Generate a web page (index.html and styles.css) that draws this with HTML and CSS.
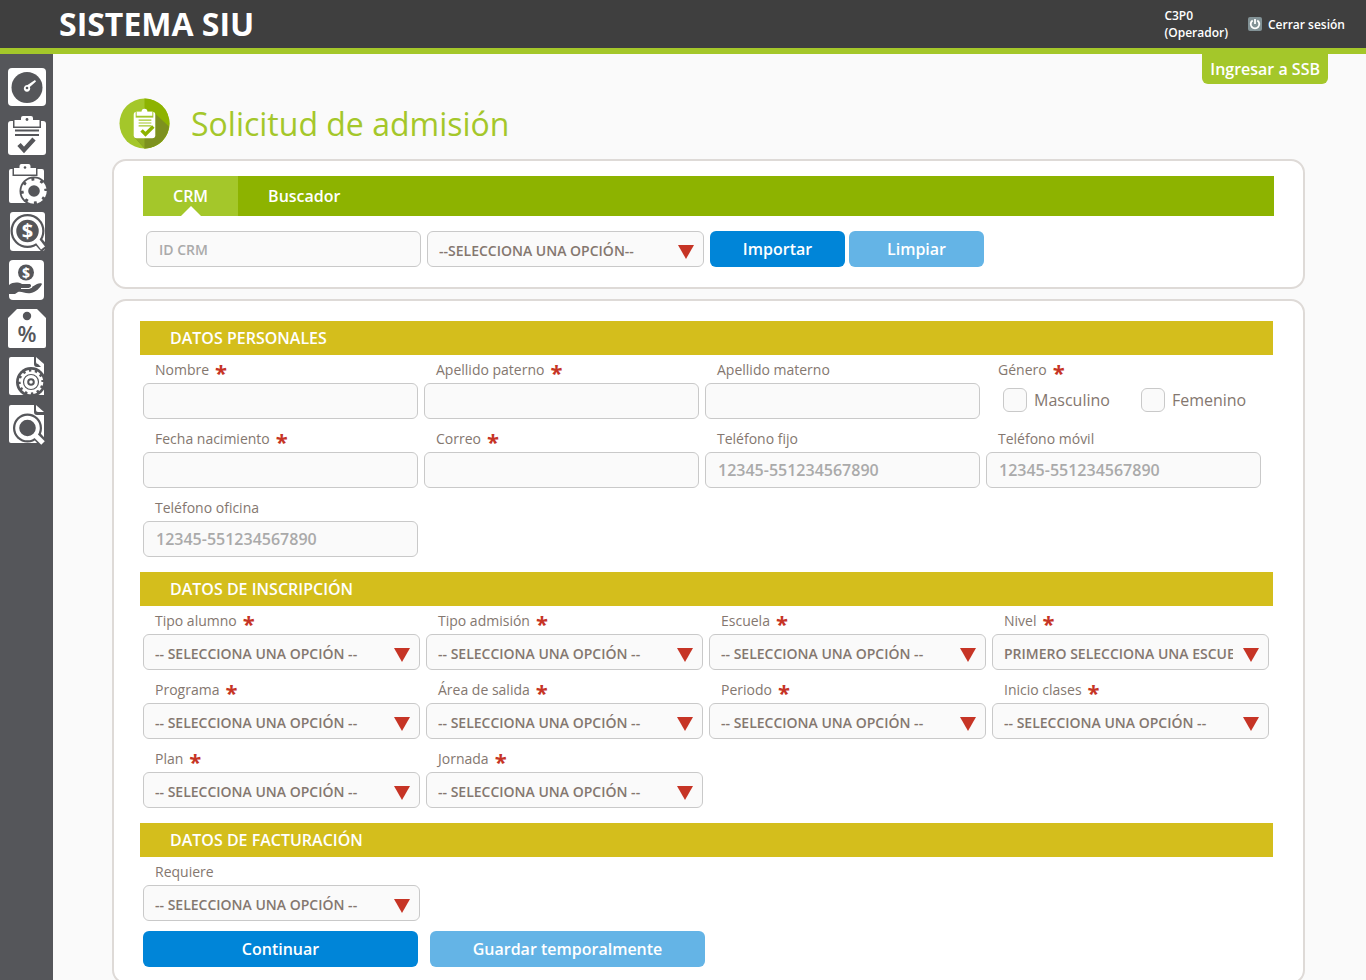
FILE: index.html
```html
<!DOCTYPE html>
<html lang="es">
<head>
<meta charset="utf-8">
<title>Sistema SIU</title>
<link rel="stylesheet" href="styles.css">
</head>
<body>
<header class="topbar">
  <div class="brand">SISTEMA SIU</div>
  <div class="user">C3P0<br>(Operador)</div>
  <a class="logout" href="#"><svg class="power" viewBox="0 0 14 14"><rect width="14" height="14" rx="2" fill="#829296"/><path d="M4.700 3.500a4.300 4.300 0 1 0 4.600 0M7 2v5" fill="none" stroke="#fff" stroke-width="1.800"/></svg>Cerrar sesión</a>
</header>
<div class="shell">
  <nav class="sidebar" aria-label="Principal">
    <a href="#" aria-label="Tablero"><svg viewBox="0 0 40 40"><rect class="w" x="1" y="1" width="38" height="38" rx="4"/><circle class="d" cx="20" cy="20.500" r="15.500"/><path class="w" d="M17 20.500a3.200 3.200 0 0 1 3.500-2.500L28 13l1 1.500-6.200 5.500a3.200 3.200 0 1 1-5.800.500z"/><circle class="d" cx="20" cy="21" r="1.300"/></svg></a>
    <a href="#" aria-label="Solicitudes"><svg viewBox="0 0 40 40"><rect class="w" x="1" y="6" width="38" height="34" rx="3"/><path class="d" d="M6 5h28v8H6z"/><path class="w" d="M7.500 5H14V3Q14 1 16 1h8Q26 1 26 3v2h6.500v6.500h-25z"/><circle class="d" cx="20" cy="4.500" r="1.400"/><path class="l" d="M8 15.500h24M8 20h24" stroke-width="2.200"/><path class="l" d="M12 29.500l5 5.500 10-11" stroke-width="4.500"/></svg></a>
    <a href="#" aria-label="Configuración de solicitudes"><svg viewBox="0 0 40 40"><path class="w" d="M4 6h31q2 0 2 2v14H30v18H4q-2 0-2-2V8q0-2 2-2z"/><path class="d" d="M5.500 5h25v8h-25z"/><path class="w" d="M7 5h5.500V3q0-2 2-2h7q2 0 2 2v2H29v6.500H7z"/><circle class="d" cx="18" cy="4.500" r="1.300"/><circle class="d" cx="27" cy="28" r="14.500"/><circle class="w" cx="27" cy="28" r="10.500"/><circle class="wl" cx="27" cy="28" r="10.500" stroke-width="4.500" stroke-dasharray="5.600 2.647"/><circle class="d" cx="27" cy="28" r="5.800"/></svg></a>
    <a href="#" aria-label="Buscar pagos"><svg viewBox="0 0 40 40"><rect class="w" x="3" y="1" width="35" height="39" rx="3"/><circle class="d" cx="20.500" cy="20" r="17"/><path class="l" d="M30 29l8 9" stroke-width="9"/><path class="wl" d="M29 28l7 9" stroke-width="5"/><circle class="wl" cx="20.500" cy="20" r="13" stroke-width="3.500"/><text class="wt" x="20.500" y="27">$</text></svg></a>
    <a href="#" aria-label="Becas"><svg viewBox="0 0 40 40"><rect class="w" x="2" y="1" width="35" height="40" rx="4"/><circle class="d" cx="19" cy="13.500" r="8"/><text class="wt small" x="19" y="18.500">$</text><path class="d" d="M2 26c4-3 9-3 13-1h7c2 0 3 2 1 3.500h1l6-3.500c2-1 5-1 5 0-2 4-6 8-11 9-6 1-9-2-13-1l-3 2H2z"/><path class="wl" d="M14 29.500h8l3-1.500" stroke-width="1.200"/></svg></a>
    <a href="#" aria-label="Descuentos"><svg viewBox="0 0 40 40"><path class="w" d="M10 2h20l9 9v28q0 2-2 2H3q-2 0-2-2V11z"/><circle class="d" cx="20" cy="9" r="4.200"/><text class="dt" x="20" y="35">%</text></svg></a>
    <a href="#" aria-label="Configurar documentos"><svg viewBox="0 0 40 40"><path class="w" d="M4 2h23v7q0 3 3 3h7v28H4q-2 0-2-2V4q0-2 2-2z"/><path class="w" d="M29 2l8 7h-6q-2 0-2-2z"/><circle class="d" cx="24" cy="27" r="15"/><path class="w" d="M31 9h6v6z"/><circle class="w" cx="24" cy="27" r="10.500"/><circle class="wl" cx="24" cy="27" r="11" stroke-width="2.500" stroke-dasharray="3.400 2.360"/><circle class="l" cx="24" cy="27" r="7.500" stroke-width="1.200"/><circle class="l" cx="24" cy="27" r="2.800" stroke-width="2"/></svg></a>
    <a href="#" aria-label="Buscar documentos"><svg viewBox="0 0 40 40"><path class="w" d="M4 2h23v7q0 3 3 3h7v28H4q-2 0-2-2V4q0-2 2-2z"/><path class="w" d="M29 2l8 7h-6q-2 0-2-2z"/><circle class="d" cx="20.500" cy="25" r="14.500"/><path class="l" d="M29 32l8 9" stroke-width="9"/><path class="wl" d="M28 32l8 8" stroke-width="5"/><circle class="wl" cx="20.500" cy="25" r="10.300" stroke-width="4"/></svg></a>
  </nav>
  <main class="main">
    <a class="ssb" href="#">Ingresar a SSB</a>
    <div class="heading">
      <svg class="heading-icon" viewBox="0 0 52 52"><circle cx="26" cy="26" r="25.500" fill="#a4c72a"/><path d="M26 .5a25.500 25.500 0 0 1 0 51z" fill="#8db300"/><path d="M37 16l14 13A25.500 25.500 0 0 1 26 51.500 L15 39z" fill="#7d911f"/><path d="M15 39l11 12.500V39z" fill="#90ac24"/><path d="M18 14h16q3 0 3 3v21q0 3-3 3H18q-3 0-3-3V17q0-3 3-3z" fill="#fff"/><path d="M17 14h18v6H17z" fill="#a4c72a"/><path d="M18 14h5q0-3 3-3t3 3h5v4H18z" fill="#fff"/><path d="M20 22.500h13M20 25.500h13M20 28.500h13" stroke="#a4c72a" stroke-width="1.200"/><path d="M23 33l4 4 8-8" fill="none" stroke="#8db300" stroke-width="3.500"/></svg>
      <h1>Solicitud de admisión</h1>
    </div>

    <section class="card search">
      <div class="tabs" role="tablist">
        <button class="tab active" role="tab" aria-selected="true">CRM</button>
        <button class="tab" role="tab" aria-selected="false">Buscador</button>
      </div>
      <form class="search-row">
        <input class="box" type="text" placeholder="ID CRM" aria-label="ID CRM">
        <span class="pick"><select class="box" aria-label="Opción CRM"><option>--SELECCIONA UNA OPCIÓN--</option></select></span>
        <button class="btn" type="button">Importar</button>
        <button class="btn light" type="button">Limpiar</button>
      </form>
    </section>

    <form class="card form">
      <h2>DATOS PERSONALES</h2>
      <div class="grid">
        <div class="field"><label for="nombre">Nombre <b>*</b></label><input class="box" id="nombre" type="text"></div>
        <div class="field"><label for="paterno">Apellido paterno <b>*</b></label><input class="box" id="paterno" type="text"></div>
        <div class="field"><label for="materno">Apellido materno</label><input class="box" id="materno" type="text"></div>
        <div class="field" role="group" aria-labelledby="genero"><span class="label" id="genero">Género <b>*</b></span>
          <div class="checks"><label class="check"><input type="checkbox">Masculino</label><label class="check"><input type="checkbox">Femenino</label></div></div>
        <div class="field"><label for="fecha">Fecha nacimiento <b>*</b></label><input class="box" id="fecha" type="text"></div>
        <div class="field"><label for="correo">Correo <b>*</b></label><input class="box" id="correo" type="text"></div>
        <div class="field"><label for="fijo">Teléfono fijo</label><input class="box phone" id="fijo" type="tel" placeholder="12345-551234567890"></div>
        <div class="field"><label for="movil">Teléfono móvil</label><input class="box phone" id="movil" type="tel" placeholder="12345-551234567890"></div>
        <div class="field"><label for="oficina">Teléfono oficina</label><input class="box phone" id="oficina" type="tel" placeholder="12345-551234567890"></div>
      </div>

      <h2>DATOS DE INSCRIPCIÓN</h2>
      <div class="grid wide">
        <div class="field"><label for="alumno">Tipo alumno <b>*</b></label><span class="pick"><select class="box" id="alumno"><option>-- SELECCIONA UNA OPCIÓN --</option></select></span></div>
        <div class="field"><label for="admision">Tipo admisión <b>*</b></label><span class="pick"><select class="box" id="admision"><option>-- SELECCIONA UNA OPCIÓN --</option></select></span></div>
        <div class="field"><label for="escuela">Escuela <b>*</b></label><span class="pick"><select class="box" id="escuela"><option>-- SELECCIONA UNA OPCIÓN --</option></select></span></div>
        <div class="field"><label for="nivel">Nivel <b>*</b></label><span class="pick"><select class="box" id="nivel"><option>PRIMERO SELECCIONA UNA ESCUELA</option></select></span></div>
        <div class="field"><label for="programa">Programa <b>*</b></label><span class="pick"><select class="box" id="programa"><option>-- SELECCIONA UNA OPCIÓN --</option></select></span></div>
        <div class="field"><label for="area">Área de salida <b>*</b></label><span class="pick"><select class="box" id="area"><option>-- SELECCIONA UNA OPCIÓN --</option></select></span></div>
        <div class="field"><label for="periodo">Periodo <b>*</b></label><span class="pick"><select class="box" id="periodo"><option>-- SELECCIONA UNA OPCIÓN --</option></select></span></div>
        <div class="field"><label for="inicio">Inicio clases <b>*</b></label><span class="pick"><select class="box" id="inicio"><option>-- SELECCIONA UNA OPCIÓN --</option></select></span></div>
        <div class="field"><label for="plan">Plan <b>*</b></label><span class="pick"><select class="box" id="plan"><option>-- SELECCIONA UNA OPCIÓN --</option></select></span></div>
        <div class="field"><label for="jornada">Jornada <b>*</b></label><span class="pick"><select class="box" id="jornada"><option>-- SELECCIONA UNA OPCIÓN --</option></select></span></div>
      </div>

      <h2>DATOS DE FACTURACIÓN</h2>
      <div class="grid wide">
        <div class="field"><label for="requiere">Requiere</label><span class="pick"><select class="box" id="requiere"><option>-- SELECCIONA UNA OPCIÓN --</option></select></span></div>
      </div>
      <div class="actions">
        <button class="btn" type="button">Continuar</button>
        <button class="btn light" type="button">Guardar temporalmente</button>
      </div>
    </form>
  </main>
</div>
</body>
</html>
```

FILE: styles.css
```css
* { box-sizing: border-box; }

body {
  margin: 0;
  height: 100vh;
  display: flex;
  flex-direction: column;
  overflow: hidden;
  background: #fafafa;
  color: #84776f;
  font-family: "Open Sans", "Noto Sans", sans-serif;
  font-size: 14px;
}

a { text-decoration: none; }
button, input, select { font-family: inherit; }

.topbar {
  flex: none;
  display: flex;
  align-items: center;
  height: 54px;
  padding: 0 21px 0 59px;
  background: #3f3f3f;
  border-bottom: 6px solid #a4c72a;
  color: #fff;
  font-size: 12px;
  font-weight: 600;
}
.brand { flex: 1; padding-bottom: 2px; font-size: 32px; font-weight: 700; }
.user { line-height: 17px; margin-right: 20px; }
.logout { display: flex; align-items: center; gap: 6px; color: #fff; }
.power { width: 14px; height: 14px; }

.shell { flex: 1; display: flex; min-height: 0; }

.sidebar {
  flex: none;
  width: 53px;
  display: flex;
  flex-direction: column;
  align-items: center;
  gap: 8px;
  padding-top: 13px;
  background: #55565a;
}
.sidebar a, .sidebar svg { display: block; width: 40px; height: 40px; }
.sidebar svg { overflow: visible; }
.w { fill: #fff; }
.d { fill: #55565a; }
.l { fill: none; stroke: #55565a; }
.wl { fill: none; stroke: #fff; }
.wt { fill: #fff; font-size: 20px; font-weight: 700; text-anchor: middle; }
.wt.small { font-size: 14px; }
.dt { fill: #55565a; font-size: 22px; font-weight: 600; text-anchor: middle; }

.main {
  flex: 1;
  min-width: 0;
  display: flex;
  flex-direction: column;
  padding: 0 61px 16px 59px;
  overflow: auto;
  scrollbar-width: none;
}
.ssb {
  align-self: flex-end;
  flex: none;
  height: 30px;
  margin-right: -23px;
  padding: 0 8px;
  border-radius: 0 0 6px 6px;
  background: #a4c72a;
  color: #fff;
  font-size: 16px;
  font-weight: 600;
  line-height: 30px;
}
.heading {
  flex: none;
  display: flex;
  align-items: center;
  gap: 21px;
  height: 51px;
  margin: 14px 0 10px 7px;
}
.heading-icon { width: 51px; height: 51px; }
h1 { margin: 0; padding-bottom: 1px; color: #a4c72a; font-size: 32px; font-weight: 400; }

.card {
  flex: none;
  background: #fff;
  border: 2px solid #dedad7;
  border-radius: 14px;
}
.search { padding: 15px 29px 20px; margin-bottom: 10px; }
.form { padding: 20px 30px 15px 26px; }

.tabs { display: flex; height: 40px; background: #8db300; }
.tab {
  position: relative;
  padding: 0 30px;
  border: 0;
  background: none;
  color: #fff;
  font-size: 16px;
  font-weight: 600;
}
.tab.active { background: #a4c72a; }
.tab.active::after {
  content: "";
  position: absolute;
  left: calc(50% - 10px);
  bottom: 0;
  border: 10px solid transparent;
  border-top: 0;
  border-bottom-color: #fff;
}

.search-row { display: flex; gap: 6px; padding: 15px 3px 0; }
.search-row > .box { width: 275px; }
.search-row .pick { width: 277px; }
.search-row .btn { width: 135px; }
.search-row .light { margin-left: -2px; }

.box {
  display: block;
  width: 100%;
  height: 36px;
  padding: 0 12px;
  border: 1px solid #c9c9c9;
  border-radius: 6px;
  background: #fafafa;
  color: #84776f;
  font-size: 14px;
  font-weight: 600;
}
.box::placeholder { color: #aaa; opacity: 1; }
.phone { font-size: 16px; }
select.box { appearance: none; padding: 2px 35px 0 11px; }

.pick { position: relative; display: block; }
.pick::after {
  content: "";
  position: absolute;
  right: 10px;
  top: 14px;
  width: 16px;
  height: 14px;
  background: #c63425;
  clip-path: polygon(0 0, 100% 0, 50% 100%);
  pointer-events: none;
}

h2 {
  margin: 10px 0 0;
  padding-left: 30px;
  background: #d4be1c;
  color: #fff;
  font-size: 16px;
  font-weight: 600;
  line-height: 34px;
}
h2:first-child { margin-top: 0; }

.grid {
  display: grid;
  grid-template-columns: repeat(4, minmax(0, 275px));
  column-gap: 6px;
  padding-left: 3px;
}
.grid.wide { grid-template-columns: repeat(4, minmax(0, 277px)); }
.field { padding-bottom: 5px; }
.field > label, .label {
  display: flex;
  gap: 6px;
  height: 28px;
  padding-left: 12px;
  line-height: 30px;
}
.field b { color: #c63425; font-size: 22px; line-height: 34px; }

.checks { display: flex; gap: 31px; padding: 5px 0 0 17px; }
.check { display: flex; align-items: center; gap: 7px; height: 24px; font-size: 16px; }
.check input {
  appearance: none;
  width: 24px;
  height: 24px;
  margin: 0;
  border: 1px solid #c9c9c9;
  border-radius: 6px;
  background: #fafafa;
}

.actions { display: flex; gap: 12px; padding: 5px 0 0 3px; }
.actions .btn { width: 275px; }
.btn {
  height: 36px;
  border: 0;
  border-radius: 6px;
  background: #0085d8;
  color: #fff;
  font-size: 16px;
  font-weight: 600;
}
.btn.light { background: #64b4e6; }
```
